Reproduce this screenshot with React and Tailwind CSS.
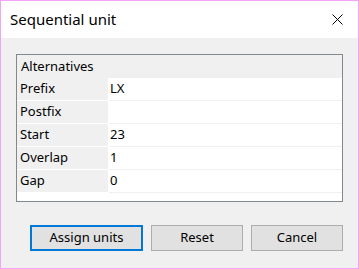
import React from 'react';

const rows = [
  { label: 'Prefix', value: 'LX' },
  { label: 'Postfix', value: '' },
  { label: 'Start', value: '23' },
  { label: 'Overlap', value: '1' },
  { label: 'Gap', value: '0' },
];

const App = () => {
  return (
    <div
      className="w-[359px] h-[269px] border border-[#f5a3f5] bg-[#f0f0f0] flex flex-col text-[13px] text-black"
      style={{ fontFamily: '"Segoe UI", "Noto Sans", sans-serif' }}
    >
      {/* Title bar */}
      <div className="h-[37px] bg-white flex items-center justify-between pl-[9px] pr-[15px] shrink-0">
        <span className="text-[15px] leading-none">Sequential unit</span>
        <svg width="11" height="11" viewBox="0 0 11 11" className="text-black">
          <path d="M0.5 0.5 L10.5 10.5 M10.5 0.5 L0.5 10.5" stroke="currentColor" strokeWidth="1" />
        </svg>
      </div>

      {/* Grid */}
      <div className="mt-[16px] ml-[15px] w-[327px] h-[148px] border border-[#828790] bg-white flex flex-col">
        <div className="h-[23px] bg-[#f0f0f0] flex items-center pl-[4px] shrink-0">Alternatives</div>
        {rows.map((r) => (
          <div key={r.label} className="h-[23px] flex shrink-0">
            <div className="w-[91px] bg-[#f0f0f0] border-b border-white flex items-center pl-[3px]">{r.label}</div>
            <div className="w-px bg-white" />
            <div className="flex-1 border-b border-[#f0f0f0] flex items-center pl-[1px]">{r.value}</div>
          </div>
        ))}
      </div>

      {/* Buttons */}
      <div className="mt-[23px] flex justify-end gap-[8px] pr-[15px]">
        <button className="w-[113px] h-[26px] bg-[#e1e1e1] border-2 border-[#0078d7] flex items-center justify-center">
          Assign units
        </button>
        <button className="w-[92px] h-[26px] bg-[#e1e1e1] border border-[#adadad] flex items-center justify-center">
          Reset
        </button>
        <button className="w-[92px] h-[26px] bg-[#e1e1e1] border border-[#adadad] flex items-center justify-center">
          Cancel
        </button>
      </div>
    </div>
  );
};

export default App;
